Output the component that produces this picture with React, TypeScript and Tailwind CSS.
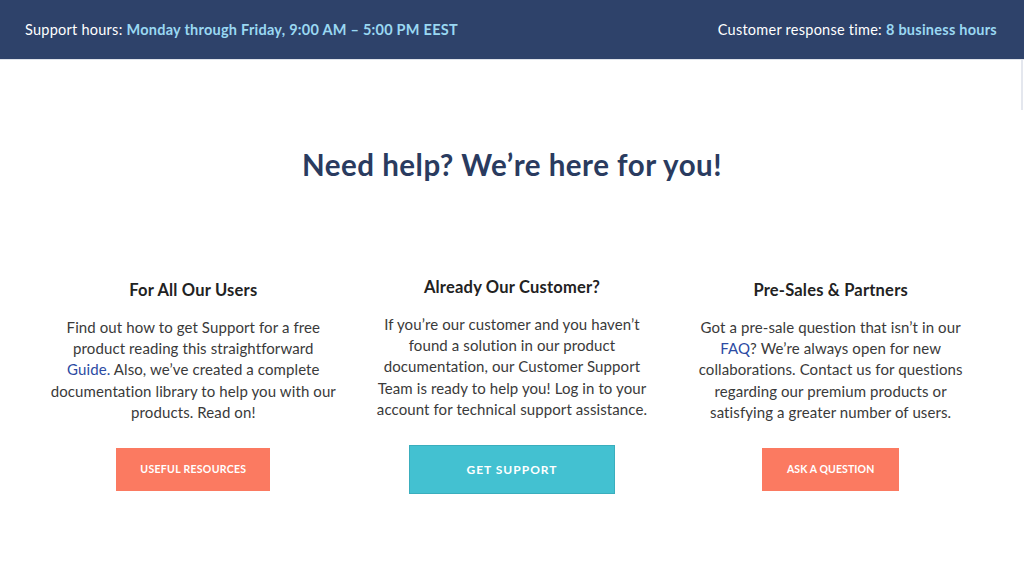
import React from "react";

const font = { fontFamily: "Lato, 'Noto Sans', sans-serif" };

function Col({
  title,
  titleClass,
  lines,
  button,
  btnClass,
  textClass,
}: {
  title: string;
  titleClass: string;
  lines: React.ReactNode[];
  button: string;
  btnClass: string;
  textClass: string;
}) {
  return (
    <div className="flex flex-col items-center text-center">
      <h3 className={`text-[16.5px] font-bold text-[#222] tracking-[0.2px] ${titleClass}`}>{title}</h3>
      <p className={`text-[15px] leading-[21.3px] text-[#3a3a3a] tracking-[0.1px] ${textClass}`}>
        {lines.map((l, i) => (
          <React.Fragment key={i}>
            {l}
            {i < lines.length - 1 && <br />}
          </React.Fragment>
        ))}
      </p>
      <button className={`flex items-center justify-center text-white font-bold uppercase ${btnClass}`}>
        {button}
      </button>
    </div>
  );
}

export default function App() {
  return (
    <div className="w-[1024px] h-[561px] bg-white overflow-hidden relative" style={font}>
      <div className="h-[59px] bg-[#2e426a] flex items-center justify-between px-[25px] text-[14.5px] text-white tracking-[0.25px]">
        <div>
          Support hours: <span className="text-[#9ad8f2] font-bold">Monday through Friday, 9:00 AM – 5:00 PM EEST</span>
        </div>
        <div className="pr-[2px]">
          Customer response time: <span className="text-[#9ad8f2] font-bold">8 business hours</span>
        </div>
      </div>
      <div className="h-px bg-[#dfe3ea]" />
      <h1 className="text-center text-[29.5px] font-bold text-[#2a3b5f] mt-[87px] leading-[36px] tracking-[0.5px]">
        Need help? We’re here for you!
      </h1>
      <div className="grid grid-cols-3 px-[34px] mt-[92px]">
        <Col
          title="For All Our Users"
          titleClass="mt-[3px]"
          textClass="mt-[14px]"
          lines={[
            "Find out how to get Support for a free",
            "product reading this straightforward",
            <>
              <span className="text-[#2c4ba3]">Guide.</span> Also, we’ve created a complete
            </>,
            "documentation library to help you with our",
            "products. Read on!",
          ]}
          button="Useful Resources"
          btnClass="mt-[25px] w-[154px] h-[43px] bg-[#fb7a61] text-[10.5px] tracking-[0.3px]"
        />
        <Col
          title="Already Our Customer?"
          titleClass=""
          textClass="mt-[14px]"
          lines={[
            "If you’re our customer and you haven’t",
            "found a solution in our product",
            "documentation, our Customer Support",
            "Team is ready to help you! Log in to your",
            "account for technical support assistance.",
          ]}
          button="Get Support"
          btnClass="mt-[25px] w-[206px] h-[49px] bg-[#43c1d1] text-[12px] tracking-[1px] border border-[#3aaebd]"
        />
        <Col
          title="Pre-Sales & Partners"
          titleClass="mt-[3px]"
          textClass="mt-[14px]"
          lines={[
            "Got a pre-sale question that isn’t in our",
            <>
              <span className="text-[#2c4ba3]">FAQ</span>? We’re always open for new
            </>,
            "collaborations. Contact us for questions",
            "regarding our premium products or",
            "satisfying a greater number of users.",
          ]}
          button="Ask a Question"
          btnClass="mt-[25px] w-[137px] h-[43px] bg-[#fb7a61] text-[10.5px] tracking-[0.1px]"
        />
      </div>
      <div className="absolute right-[1px] top-[60px] w-[2px] h-[50px] bg-[#e4e7ee]" />
    </div>
  );
}
